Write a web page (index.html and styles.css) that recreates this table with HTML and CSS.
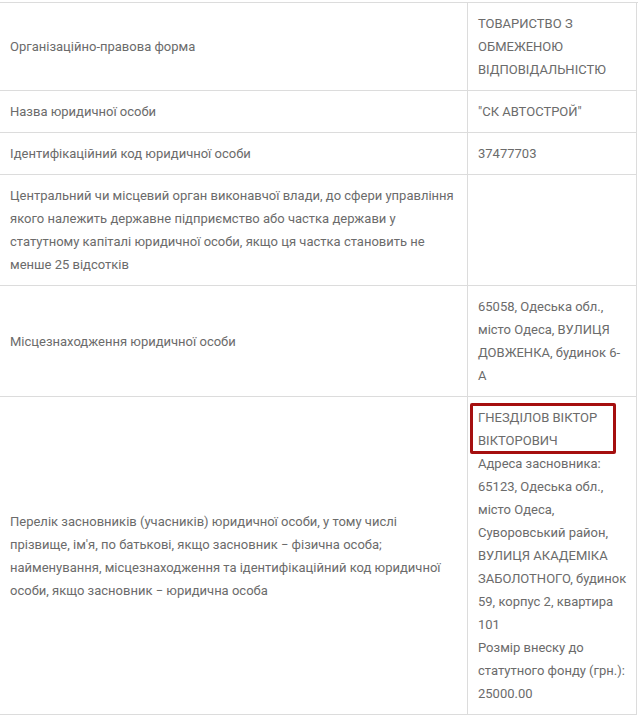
FILE: index.html
```html
<!DOCTYPE html>
<html lang="uk">
<head>
<meta charset="utf-8">
<title>Відомості про юридичну особу</title>
<link rel="stylesheet" href="styles.css">
</head>
<body>
<div class="info-table">
  <div class="cell label">Організаційно-правова форма</div>
  <div class="cell value">ТОВАРИСТВО З ОБМЕЖЕНОЮ ВІДПОВІДАЛЬНІСТЮ</div>

  <div class="cell label">Назва юридичної особи</div>
  <div class="cell value">"СК АВТОСТРОЙ"</div>

  <div class="cell label">Ідентифікаційний код юридичної особи</div>
  <div class="cell value">37477703</div>

  <div class="cell label">Центральний чи місцевий орган виконавчої влади, до сфери управління якого належить державне підприємство або частка держави у статутному капіталі юридичної особи, якщо ця частка становить не менше 25 відсотків</div>
  <div class="cell value"></div>

  <div class="cell label">Місцезнаходження юридичної особи</div>
  <div class="cell value">65058, Одеська обл., місто Одеса, ВУЛИЦЯ ДОВЖЕНКА, будинок 6-А</div>

  <div class="cell label">Перелік засновників (учасників) юридичної особи, у тому числі прізвище, ім'я, по батькові, якщо засновник − фізична особа; найменування, місцезнаходження та ідентифікаційний код юридичної особи, якщо засновник − юридична особа</div>
  <div class="cell value founders">
    <div class="founder-name">ГНЕЗДІЛОВ ВІКТОР ВІКТОРОВИЧ</div>
    <div>Адреса засновника: 65123, Одеська обл., місто Одеса, Суворовський район, ВУЛИЦЯ АКАДЕМІКА ЗАБОЛОТНОГО, будинок 59, корпус 2, квартира 101</div>
    <div>Розмір внеску до статутного фонду (грн.): 25000.00</div>
  </div>
</div>
</body>
</html>
```
FILE: styles.css
```css
html, body {
  margin: 0;
  padding: 0;
  background: #fff;
}

body {
  font-family: Roboto, "Noto Sans", sans-serif;
  font-size: 13px;
  line-height: 23px;
  color: #6b6b6b;
}

.info-table {
  display: grid;
  grid-template-columns: 467px 170px;
  width: 638px;
  margin-top: 2px;
  border-top: 1px solid #dcdcdc;
}

.cell {
  border-bottom: 1px solid #dcdcdc;
  padding: 9px 10px;
  box-sizing: border-box;
}

.label {
  display: flex;
  align-items: center;
}

.value {
  border-left: 1px solid #dcdcdc;
  border-right: 1px solid #dcdcdc;
  padding-right: 9px;
}

.value:not(.founders) {
  display: flex;
  align-items: center;
}

.founders {
  display: block;
}

.founder-name {
  position: relative;
}

.founder-name::after {
  content: "";
  position: absolute;
  top: -3px;
  left: -8px;
  width: 146px;
  height: 51px;
  box-sizing: border-box;
  border: 3px solid #a50f0f;
  border-radius: 2px;
  pointer-events: none;
}
```
